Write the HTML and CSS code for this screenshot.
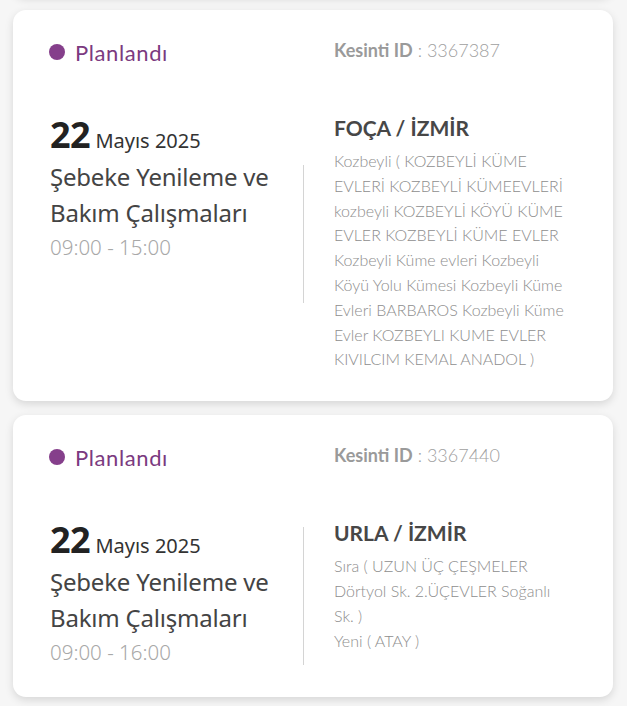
FILE: index.html
```html
<!DOCTYPE html>
<html lang="tr">
<head>
<meta charset="utf-8">
<title>Kesintiler</title>
<link rel="stylesheet" href="styles.css">
</head>
<body>
<div class="list">
  <div class="card card--prev"></div>

  <div class="card">
    <div class="top-row">
      <div class="status"><span class="status-dot"></span>Planlandı</div>
      <div class="outage-id"><b>Kesinti ID</b> : 3367387</div>
    </div>
    <div class="main-row">
      <div class="info">
        <div class="date"><span class="day">22</span> Mayıs 2025</div>
        <div class="title">Şebeke Yenileme ve<br>Bakım Çalışmaları</div>
        <div class="time">09:00 - 15:00</div>
      </div>
      <div class="divider divider--low"></div>
      <div class="place">
        <div class="city">FOÇA / İZMİR</div>
        <div class="address">Kozbeyli ( KOZBEYLİ KÜME<br>EVLERİ KOZBEYLİ KÜMEEVLERİ<br>kozbeyli KOZBEYLİ KÖYÜ KÜME<br>EVLER KOZBEYLİ KÜME EVLER<br>Kozbeyli Küme evleri Kozbeyli<br>Köyü Yolu Kümesi Kozbeyli Küme<br>Evleri BARBAROS Kozbeyli Küme<br>Evler KOZBEYLI KUME EVLER<br>KIVILCIM KEMAL ANADOL )</div>
      </div>
    </div>
  </div>

  <div class="card">
    <div class="top-row">
      <div class="status"><span class="status-dot"></span>Planlandı</div>
      <div class="outage-id"><b>Kesinti ID</b> : 3367440</div>
    </div>
    <div class="main-row">
      <div class="info">
        <div class="date"><span class="day">22</span> Mayıs 2025</div>
        <div class="title">Şebeke Yenileme ve<br>Bakım Çalışmaları</div>
        <div class="time">09:00 - 16:00</div>
      </div>
      <div class="divider"></div>
      <div class="place">
        <div class="city">URLA / İZMİR</div>
        <div class="address">Sıra ( UZUN ÜÇ ÇEŞMELER<br>Dörtyol Sk. 2.ÜÇEVLER Soğanlı<br>Sk. )<br>Yeni ( ATAY )</div>
      </div>
    </div>
  </div>
</div>
</body>
</html>
```

FILE: styles.css
```css
html, body {
  margin: 0;
  padding: 0;
}

body {
  background: #f6f6f6;
  font-family: "Lato", "Open Sans", sans-serif;
  width: 627px;
  height: 706px;
  overflow: hidden;
}

.list {
  display: flex;
  flex-direction: column;
  gap: 14px;
  padding: 0 14px 0 13px;
  margin-top: -94px;
}

.card {
  background: #ffffff;
  border-radius: 13px;
  box-shadow: 0 3px 9px rgba(0, 0, 0, 0.13);
  padding: 27px 12px 29px 37px;
}

.card--prev {
  height: 90px;
  padding: 0;
}

.top-row {
  display: flex;
  align-items: center;
  height: 30px;
}

.status {
  width: 284px;
  display: flex;
  align-items: center;
  gap: 10px;
  color: #7b3a80;
  font-size: 22px;
  letter-spacing: 0.6px;
}

.status-dot {
  width: 16px;
  height: 16px;
  border-radius: 50%;
  background: #853f8b;
  margin-left: -1px;
}

.outage-id {
  color: #a0a0a0;
  font-size: 18px;
  font-weight: 300;
  margin-top: -4px;
}

.outage-id b {
  color: #9a9a9a;
  font-weight: 700;
}

.main-row {
  display: flex;
  align-items: flex-start;
  margin-top: 46px;
}

.info {
  width: 253px;
  font-family: "Noto Sans", "Open Sans", sans-serif;
}

.date {
  color: #333333;
  font-size: 20px;
  line-height: 44px;
  margin-top: 0;
}

.day {
  font-size: 36px;
  font-weight: 700;
  color: #222222;
  letter-spacing: -0.5px;
}

.title {
  color: #444444;
  font-size: 24px;
  line-height: 36px;
  margin-top: -4px;
  letter-spacing: -0.2px;
}

.time {
  color: #a8a8a8;
  font-size: 20.5px;
  line-height: 32px;
  font-weight: 300;
}

.divider {
  width: 1px;
  height: 138px;
  background: #d4d4d4;
  margin-top: 9px;
  flex: none;
}

.divider--low {
  margin-top: 52px;
}

.place {
  padding-left: 30px;
  flex: 1;
}

.city {
  color: #474747;
  font-size: 21px;
  font-weight: 700;
  line-height: 30px;
}

.address {
  margin-top: 6px;
  color: #8e8e8e;
  font-size: 16px;
  font-weight: 300;
  line-height: 24.8px;
  white-space: nowrap;
}
```
